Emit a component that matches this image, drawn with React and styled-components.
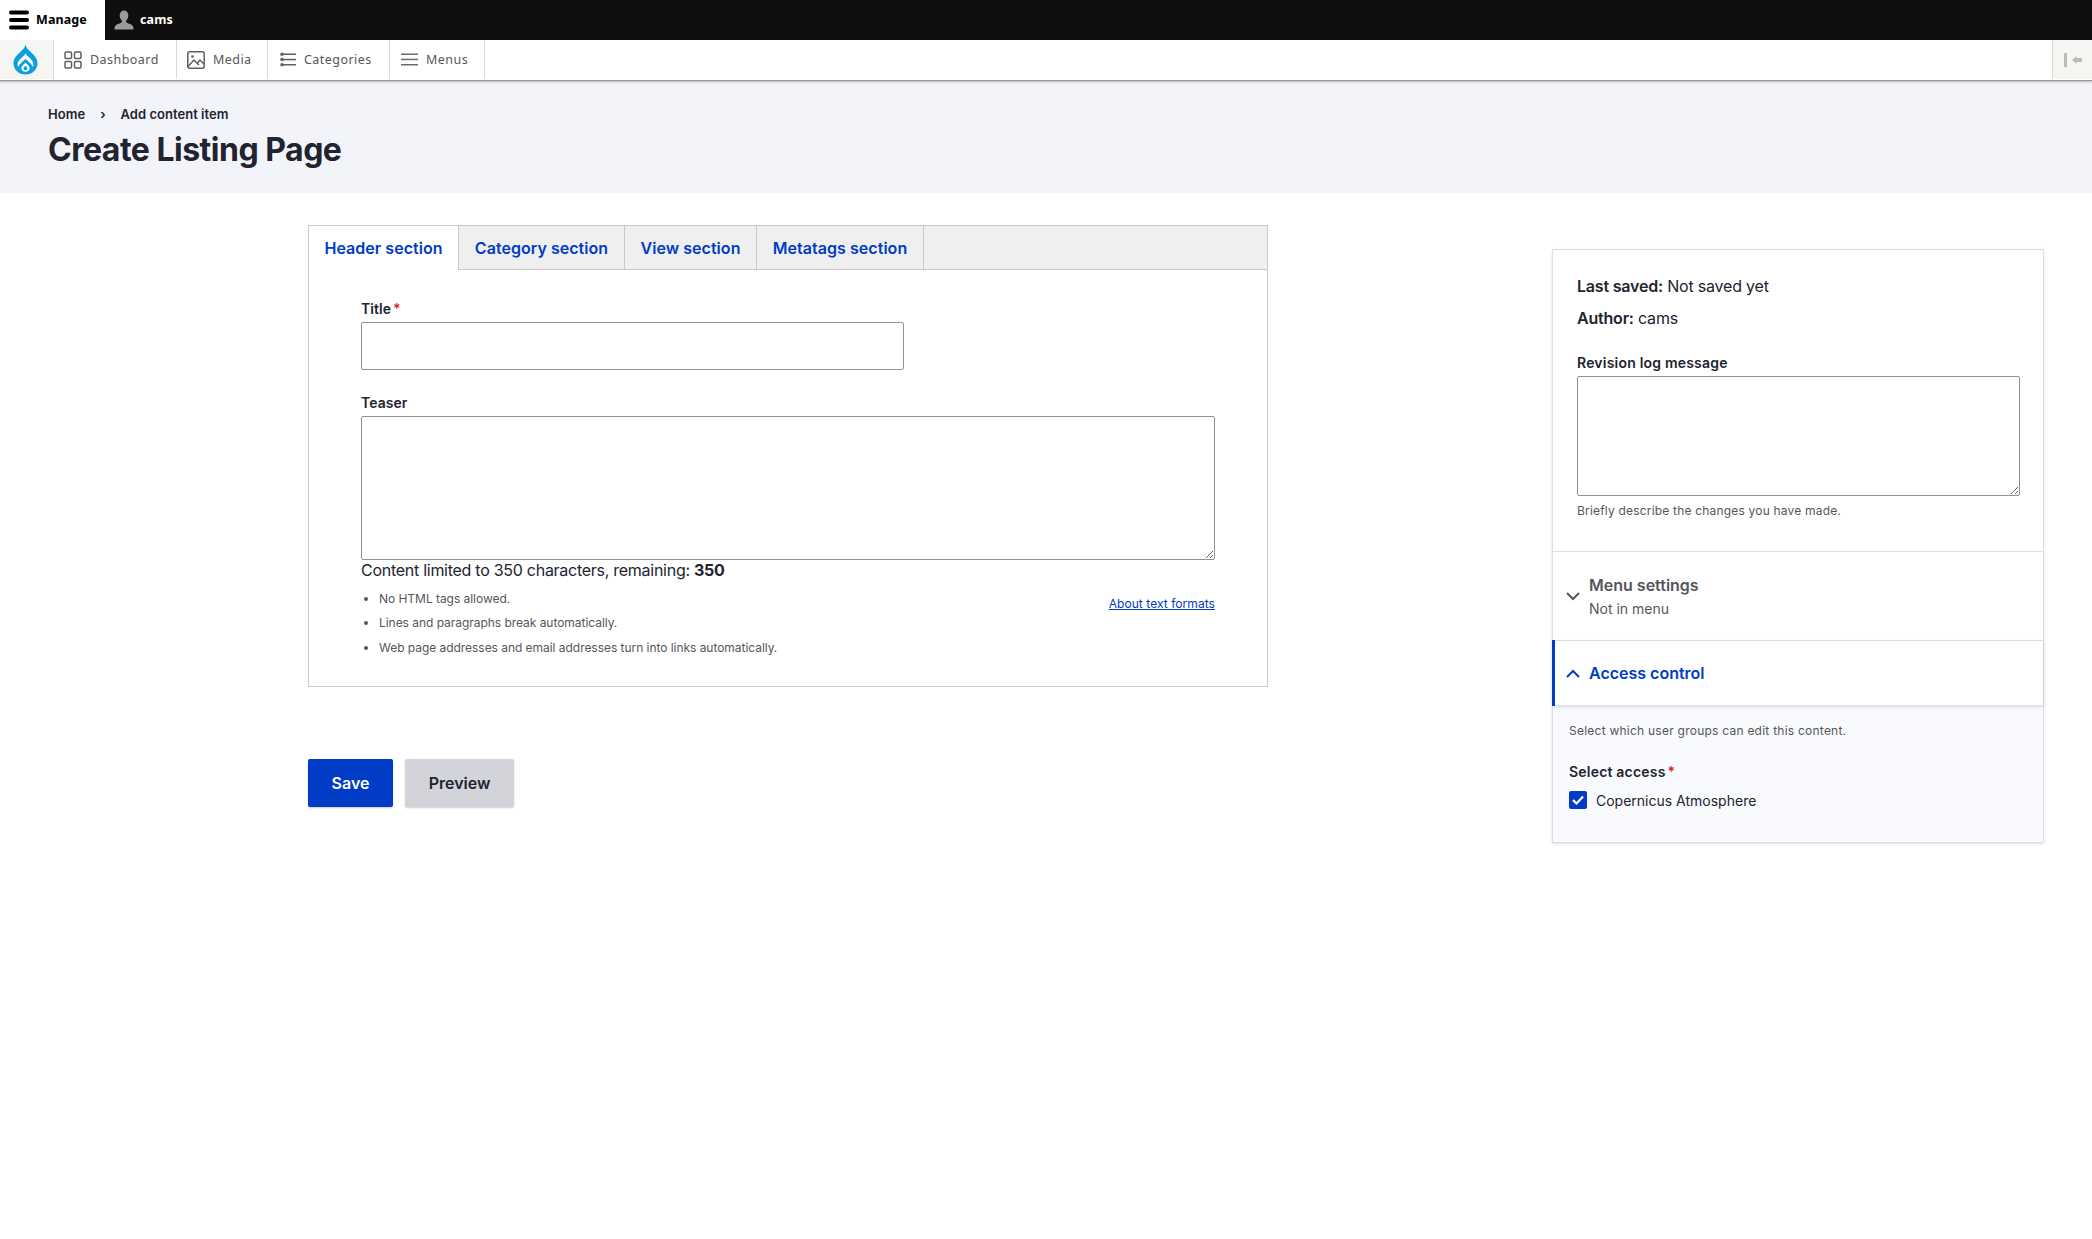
import React from "react";
import styled, { createGlobalStyle } from "styled-components";

const Global = createGlobalStyle`
  html, body { margin: 0; padding: 0; background: #fff; }
  body { font-family: Inter, "Liberation Sans", sans-serif; color: #222330; }
  *, *::before, *::after { box-sizing: border-box; }
`;

const Page = styled.div`
  width: 2092px;
  min-height: 1239px;
  background: #fff;
`;
const BlackBar = styled.div`
  display: flex;
  height: 40px;
  background: #0f0f0f;
`;
const BlackTab = styled.div`
  display: flex;
  align-items: center;
  height: 40px;
  width: ${p => p.$w}px;
  padding: 0 0 1px ${p => p.$pl}px;
  gap: ${p => p.$gap}px;
  background: ${p => (p.$active ? "#fff" : "transparent")};
  color: ${p => (p.$active ? "#000" : "#fff")};
  font: 700 12.5px "Noto Sans", sans-serif;
  letter-spacing: 0.1px;
`;
const MenuBar = styled.div`
  position: relative;
  display: flex;
  height: 40px;
  background: #fff;
  box-shadow: 0 1px 0 #999, 0 2px 2px rgba(0, 0, 0, 0.25);
`;
const LogoCell = styled.div`
  display: flex;
  align-items: center;
  justify-content: center;
  width: 54px;
  height: 39px;
  background: #f5f5f2;
  border-right: 1px solid #d9d9d9;
  padding-right: 3px;
`;
const MenuItem = styled.div`
  display: flex;
  align-items: center;
  width: ${p => p.$w}px;
  height: 39px;
  padding-left: ${p => p.$pl}px;
  gap: ${p => p.$gap}px;
  border-right: 1px solid #d9d9d9;
  color: #565656;
  font: 400 12.5px "Noto Sans", sans-serif;
  letter-spacing: 0.45px;
`;
const Spacer = styled.div`
  flex: 1;
`;
const CollapseCell = styled.div`
  display: flex;
  align-items: center;
  justify-content: center;
  width: 40px;
  height: 39px;
  background: #f5f5f2;
  border-left: 1px solid #d9d9d9;
`;
const PageHeader = styled.header`
  height: 113px;
  padding: 26px 48px 0;
  background: #f3f4f9;
`;
const Crumbs = styled.div`
  display: flex;
  align-items: center;
  height: 16px;
  font-size: 13px;
  font-weight: 600;
  letter-spacing: 0.03px;
  color: #222330;
`;
const CrumbSep = styled.span`
  margin: 0 15px 0 15px;
  font-size: 13px;
`;
const Title = styled.h1`
  margin: 8px 0 0;
  font-size: 32px;
  line-height: 40px;
  font-weight: 700;
  letter-spacing: -0.5px;
  color: #222330;
`;
const Main = styled.main`
  display: flex;
  justify-content: space-between;
  align-items: flex-start;
  padding: 32px 48px 0 308px;
`;
const FormCol = styled.div`
  width: 960px;
`;
const TabBox = styled.section`
  border: 1px solid #c9c9c9;
  height: 462px;
`;
const TabRow = styled.div`
  display: flex;
  height: 44px;
  background: #efefef;
  border-bottom: 1px solid #c9c9c9;
`;
const Tab = styled.div`
  display: flex;
  align-items: center;
  justify-content: center;
  width: ${p => p.$w}px;
  height: ${p => (p.$active ? "44px" : "43px")};
  background: ${p => (p.$active ? "#fff" : "transparent")};
  border-right: 1px solid #c9c9c9;
  color: #003cc5;
  font-size: 16px;
  font-weight: 600;
  letter-spacing: 0.04px;
`;
const TabBody = styled.div`
  padding: 30px 52px 0;
`;
const Label = styled.div`
  font-size: 14px;
  line-height: 18px;
  font-weight: 600;
  color: #222330;
  letter-spacing: 0.05px;
  margin-bottom: 4px;
`;
const Req = styled.span`
  color: #dc2323;
  margin-left: 2px;
`;
const TextInput = styled.div`
  width: 543px;
  height: 48px;
  border: 1px solid #8e929c;
  border-radius: 2px;
  background: #fff;
`;
const TeaserLabel = styled(Label)`
  margin-top: 24px;
`;
const TextArea = styled.textarea`
  display: block;
  width: ${p => p.$w}px;
  height: ${p => p.$h}px;
  border: 1px solid #8e929c;
  border-radius: 2px;
  background: #fff;
  resize: vertical;
  padding: 0;
  margin: 0;
  outline: none;
`;
const Counter = styled.div`
  margin-top: -1px;
  font-size: 16px;
  line-height: 22px;
  letter-spacing: -0.27px;
  color: #222330;
  b { font-weight: 700; }
`;
const HelpRow = styled.div`
  display: flex;
  justify-content: space-between;
  align-items: flex-start;
  margin-top: 10px;
`;
const HelpList = styled.ul`
  margin: 0;
  padding: 0 0 0 18px;
  font-size: 12px;
  line-height: 16px;
  color: #55565b;
  letter-spacing: -0.04px;
  li { margin-bottom: 8.4px; }
`;
const HelpLink = styled.a`
  margin-top: 5px;
  font-size: 12px;
  line-height: 16px;
  letter-spacing: 0.06px;
  color: #003cc5;
  text-decoration: underline;
`;
const Actions = styled.div`
  display: flex;
  gap: 12px;
  margin-top: 72px;
`;
const Button = styled.button`
  width: ${p => p.$w}px;
  height: 48px;
  padding: 0;
  border: none;
  border-radius: 2px;
  font: 600 16px Inter, sans-serif;
  background: ${p => (p.$primary ? "#003cc5" : "#d3d4d9")};
  color: ${p => (p.$primary ? "#fff" : "#222330")};
  box-shadow: 0 1px 2px rgba(0, 0, 0, 0.2);
`;
const Side = styled.aside`
  width: 492px;
  margin-top: 24px;
  border: 1px solid #dedfe4;
  box-shadow: 0 1px 3px rgba(0, 0, 0, 0.12);
  background: #fff;
`;
const Meta = styled.div`
  height: 302px;
  padding: 24px 24px 0;
  border-bottom: 1px solid #dedfe4;
`;
const MetaLine = styled.div`
  font-size: 16px;
  line-height: 24px;
  margin-bottom: 8px;
  letter-spacing: -0.2px;
  color: #222330;
  b { font-weight: 600; }
`;
const RevisionLabel = styled(Label)`
  margin: 24px 0 4px;
  letter-spacing: 0.2px;
`;
const SideHelp = styled.div`
  margin-top: 7px;
  font-size: 12px;
  line-height: 16px;
  color: #55565b;
  letter-spacing: 0.19px;
`;
const AccHead = styled.div`
  position: relative;
  display: flex;
  align-items: center;
  gap: 9px;
  height: ${p => p.$h}px;
  padding-left: 13px;
  background: #fff;
  border-bottom: 1px solid #dedfe4;
  ${p => p.$open && "box-shadow: 0 1px 3px rgba(0,0,0,.12);"}
`;
const OpenBar = styled.span`
  position: absolute;
  left: -1px;
  top: -1px;
  bottom: -1px;
  width: 3px;
  background: #003cc5;
`;
const AccTitle = styled.div`
  font-size: 16px;
  line-height: 22px;
  font-weight: 600;
  color: ${p => (p.$open ? "#003cc5" : "#55565b")};
`;
const AccSub = styled.div`
  font-size: 14px;
  line-height: 20px;
  margin-top: 3px;
  color: #55565b;
`;
const AccBody = styled.div`
  height: 136px;
  padding: 17px 20px 0 16px;
  background: #f9fafd;
`;
const AccNote = styled.div`
  font-size: 12px;
  line-height: 16px;
  color: #55565b;
  letter-spacing: 0.24px;
`;
const GroupLabel = styled(Label)`
  margin: 24px 0 10px;
  letter-spacing: 0.2px;
`;
const CheckRow = styled.div`
  display: flex;
  align-items: center;
  gap: 9px;
  font-size: 14px;
  color: #222330;
`;
const Check = styled.span`
  display: flex;
  align-items: center;
  justify-content: center;
  width: 18px;
  height: 18px;
  border-radius: 2px;
  background: #003cc5;
`;

const Burger = () => (
  <svg width="20" height="20" viewBox="0 0 20 20" fill="#000">
    <rect y="0.5" width="20" height="4" rx="2" />
    <rect y="8" width="20" height="4" rx="2" />
    <rect y="15.5" width="20" height="4" rx="2" />
  </svg>
);
const Person = () => (
  <svg width="20" height="20" viewBox="0 0 20 20" fill="#9a9a9a">
    <path d="M10 0.5c2.7 0 4.3 2.1 4.3 5 0 2.3-1 4.3-2.2 5.2-.3 1 .1 1.7 1.3 2.2 2.2.9 4.9 1.6 5.6 3.4.3.8.5 1.8.5 3.2H.5c0-1.4.2-2.4.5-3.2.7-1.8 3.4-2.5 5.6-3.4 1.2-.5 1.6-1.2 1.3-2.2C6.7 9.8 5.7 7.8 5.7 5.5c0-2.9 1.6-5 4.3-5z" />
  </svg>
);
const Drop = () => (
  <svg width="25" height="31" viewBox="0 0 25 31">
    <path
      d="M12.5 0.5c.3 3 2.6 5 5 7.2 3.4 3.1 7 6.4 7 11.5C24.500 25.700 19.200 30.500 12.500 30.500S.5 25.700.5 19.200c0-5.100 3.600-8.400 7-11.500 2.400-2.200 4.700-4.200 5-7.200z"
      fill="#0b9fe0"
    />
    <path
      d="M4.600 20.500c0-3 2.300-5.200 4.500-7.200 1.300-1.200 2.600-2.400 3.400-3.800.8 1.400 2.100 2.600 3.400 3.800 2.200 2 4.500 4.200 4.500 7.200 0 .9-.2 1.700-.5 2.400-1.400-2.900-3.900-5-7.400-7.900-3.500 2.900-6 5-7.400 7.900-.3-.7-.5-1.500-.5-2.400z"
      fill="#fff"
    />
    <path
      d="M12.500 18.800c2.500 2.100 4.200 3.800 4.200 5.500 0 2.300-1.900 3.500-4.200 3.500s-4.200-1.200-4.200-3.500c0-1.700 1.700-3.400 4.200-5.500z"
      fill="#fff"
    />
    <path
      d="M12.500 21.800c1.100 1 1.800 1.700 1.800 2.600 0 1-.8 1.500-1.800 1.500s-1.800-.5-1.800-1.500c0-.9.7-1.600 1.800-2.600z"
      fill="#0b9fe0"
    />
  </svg>
);
const Grid = () => (
  <svg width="18" height="18" viewBox="0 0 18 18" fill="none" stroke="#5f5f5f" strokeWidth="1.5">
    <rect x="1" y="1" width="6.500" height="6.500" rx="1.200" />
    <rect x="10.500" y="1" width="6.500" height="6.500" rx="1.200" />
    <rect x="1" y="10.500" width="6.500" height="6.500" rx="1.200" />
    <rect x="10.500" y="10.500" width="6.500" height="6.500" rx="1.200" />
  </svg>
);
const ImageIcon = () => (
  <svg width="18" height="18" viewBox="0 0 18 18" fill="none" stroke="#5f5f5f" strokeWidth="1.5">
    <rect x="0.8" y="0.8" width="16.400" height="16.400" rx="2" />
    <circle cx="5.500" cy="5.500" r="1.300" fill="#5f5f5f" stroke="none" />
    <path d="M1 15.500 L7 9 L12 14 M10.500 12 L13 9 L17 13" />
  </svg>
);
const ListIcon = () => (
  <svg width="16" height="15" viewBox="0 0 16 15" fill="#5f5f5f">
    <rect x="3" y="1.500" width="13" height="1.500" />
    <rect x="3" y="6.800" width="13" height="1.500" />
    <rect x="3" y="12" width="13" height="1.500" />
    <circle cx="2" cy="2.200" r="1.700" />
    <circle cx="2" cy="7.500" r="1.700" />
    <circle cx="2" cy="12.800" r="1.700" />
  </svg>
);
const MenuIcon = () => (
  <svg width="17" height="13" viewBox="0 0 17 13" fill="#6b6b6b">
    <rect y="0.500" width="17" height="1.500" />
    <rect y="5.700" width="17" height="1.500" />
    <rect y="11" width="17" height="1.500" />
  </svg>
);
const CollapseIcon = () => (
  <svg width="20" height="14" viewBox="0 0 20 14" fill="#bbbbbb">
    <rect x="1" y="0" width="3" height="14" rx="0.500" />
    <path d="M9 7 L13.500 3 V5 H19 V9 H13.500 V11z" />
  </svg>
);
const Chevron = ({ up, color }) => (
  <svg width="14" height="9" viewBox="0 0 14 9" fill="none" stroke={color} strokeWidth="2">
    <path d={up ? "M1 8 L7 2 L13 8" : "M1 1 L7 7 L13 1"} />
  </svg>
);
const Tick = () => (
  <svg width="12" height="10" viewBox="0 0 12 10" fill="none" stroke="#fff" strokeWidth="2.200">
    <path d="M1 5 L4.500 8.500 L11 1.500" />
  </svg>
);

export default function App() {
  return (
    <Page>
      <Global />
      <BlackBar>
        <BlackTab $active $w={105} $pl={9} $gap={7}>
          <Burger />
          Manage
        </BlackTab>
        <BlackTab $w={100} $pl={9} $gap={6}>
          <Person />
          cams
        </BlackTab>
      </BlackBar>
      <MenuBar>
        <LogoCell><Drop /></LogoCell>
        <MenuItem $w={123} $pl={10} $gap={8}><Grid />Dashboard</MenuItem>
        <MenuItem $w={91} $pl={10} $gap={8}><ImageIcon />Media</MenuItem>
        <MenuItem $w={122} $pl={12} $gap={8}><ListIcon />Categories</MenuItem>
        <MenuItem $w={95} $pl={11} $gap={8}><MenuIcon />Menus</MenuItem>
        <Spacer />
        <CollapseCell><CollapseIcon /></CollapseCell>
      </MenuBar>
      <PageHeader>
        <Crumbs>Home<CrumbSep>›</CrumbSep>Add content item</Crumbs>
        <Title>Create Listing Page</Title>
      </PageHeader>
      <Main>
        <FormCol>
          <TabBox>
            <TabRow>
              <Tab $active $w={150}>Header section</Tab>
              <Tab $w={166}>Category section</Tab>
              <Tab $w={132}>View section</Tab>
              <Tab $w={167}>Metatags section</Tab>
            </TabRow>
            <TabBody>
              <Label>Title<Req>*</Req></Label>
              <TextInput />
              <TeaserLabel>Teaser</TeaserLabel>
              <TextArea $w={854} $h={144} />
              <Counter>Content limited to 350 characters, remaining: <b>350</b></Counter>
              <HelpRow>
                <HelpList>
                  <li>No HTML tags allowed.</li>
                  <li>Lines and paragraphs break automatically.</li>
                  <li>Web page addresses and email addresses turn into links automatically.</li>
                </HelpList>
                <HelpLink>About text formats</HelpLink>
              </HelpRow>
            </TabBody>
          </TabBox>
          <Actions>
            <Button $primary $w={85}>Save</Button>
            <Button $w={109}>Preview</Button>
          </Actions>
        </FormCol>
        <Side>
          <Meta>
            <MetaLine><b>Last saved:</b> Not saved yet</MetaLine>
            <MetaLine><b>Author:</b> cams</MetaLine>
            <RevisionLabel>Revision log message</RevisionLabel>
            <TextArea $w={443} $h={120} />
            <SideHelp>Briefly describe the changes you have made.</SideHelp>
          </Meta>
          <AccHead $h={89}>
            <Chevron color="#55565b" />
            <div>
              <AccTitle>Menu settings</AccTitle>
              <AccSub>Not in menu</AccSub>
            </div>
          </AccHead>
          <AccHead $h={65} $open>
            <OpenBar />
            <Chevron up color="#003cc5" />
            <AccTitle $open>Access control</AccTitle>
          </AccHead>
          <AccBody>
            <AccNote>Select which user groups can edit this content.</AccNote>
            <GroupLabel>Select access<Req>*</Req></GroupLabel>
            <CheckRow><Check><Tick /></Check>Copernicus Atmosphere</CheckRow>
          </AccBody>
        </Side>
      </Main>
    </Page>
  );
}
